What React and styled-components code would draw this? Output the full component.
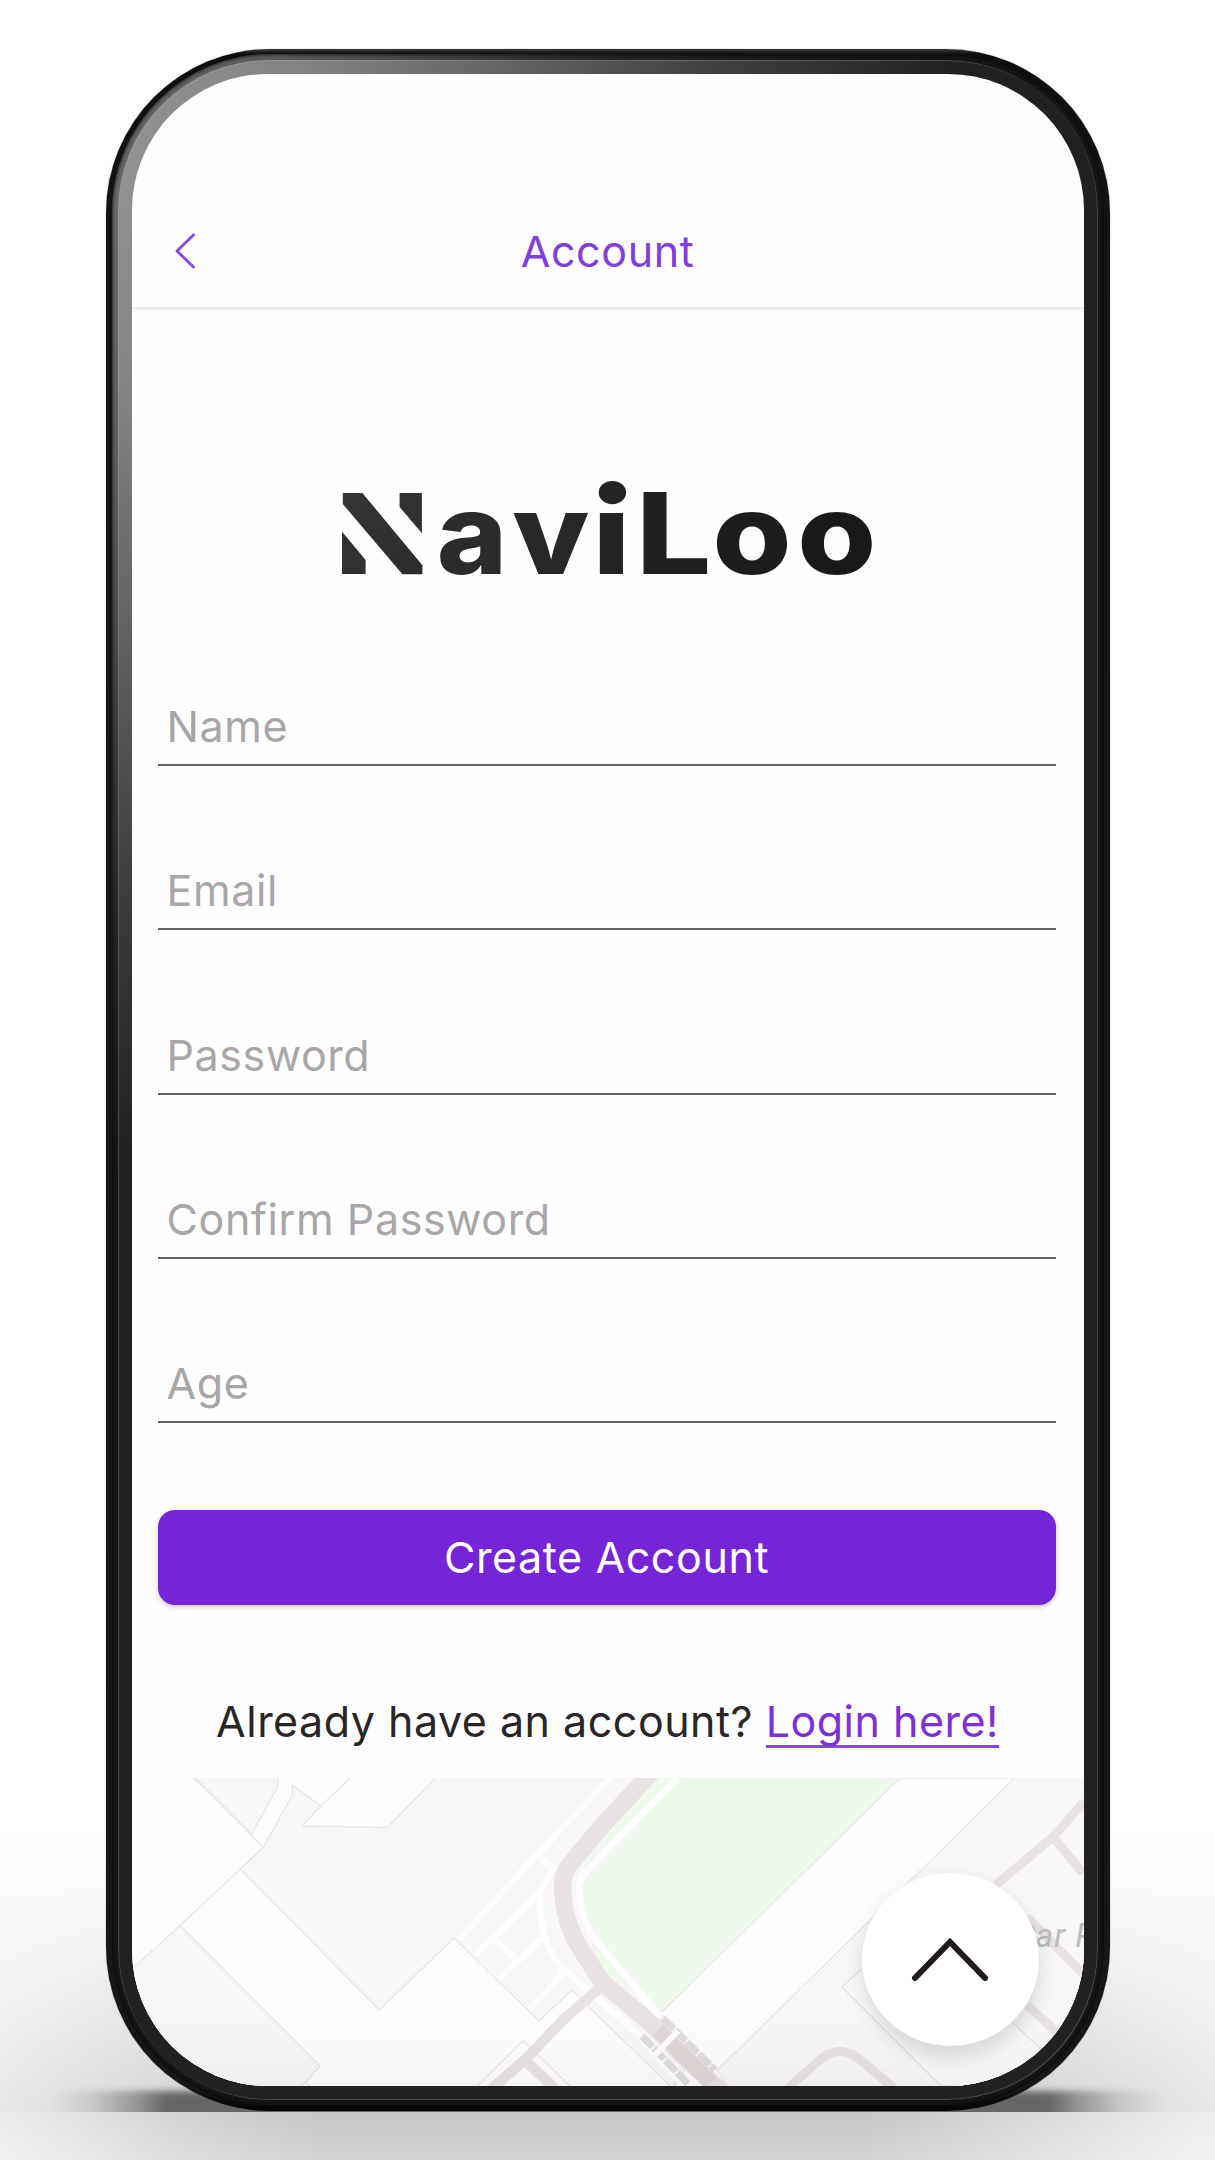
import React from "react";
import styled, { createGlobalStyle } from "styled-components";

const Global = createGlobalStyle`
  * { box-sizing: border-box; }
  body { margin: 0; background: #fff; font-family: Inter, "Liberation Sans", sans-serif; }
`;

const Stage = styled.main`
  position: relative;
  width: 1215px;
  height: 2160px;
  overflow: hidden;
  display: flex;
  justify-content: center;
  align-items: flex-start;
  padding: 49px 0 0 0;
  background:
    linear-gradient(to bottom, #fff 1830px, rgba(255, 255, 255, 0) 2110px),
    radial-gradient(ellipse 900px 620px at 607px 2112px, #c6c6c6 0, #cdcdcd 40%, #ebebeb 72%, #f0f0f0 100%);
`;

const ContactShadow = styled.div`
  position: absolute;
  left: 50px;
  top: 2091px;
  width: 1115px;
  height: 30px;
  background: linear-gradient(
    to right,
    rgba(102, 102, 102, 0), rgba(102, 102, 102, 0.15) 3.5%, rgba(102, 102, 102, 0.55) 7.5%, #666 10.5%,
    #666 89.5%, rgba(102, 102, 102, 0.55) 92.5%, rgba(102, 102, 102, 0.15) 96.5%, rgba(102, 102, 102, 0)
  );
  filter: blur(3px);
`;

const Floor = styled.div`
  position: absolute;
  left: 0;
  right: 0;
  top: 2112px;
  bottom: 0;
  background:
    linear-gradient(to bottom, rgba(255, 255, 255, 0), rgba(255, 255, 255, 0.25)),
    linear-gradient(to right, #ebebeb 0, #e2e2e2 80px, #d3d3d3 180px, #c6c6c6 330px, #c6c6c6 860px, #dcdcdc 1060px, #ececec 1200px);
`;

const Shell = styled.div`
  position: relative;
  width: 1004px;
  height: 2062px;
  border-radius: 164px;
  padding: 5px 6px 5px;
  background: linear-gradient(to bottom, #3a3d3a 0, #0d0d0d 5px, #151515 200px, #171717 2040px, #060606 2060px);
  box-shadow: 0 0 1px #555;
`;

const Rim = styled.div`
  width: 100%;
  height: 100%;
  border-radius: 158px;
  padding: 6px;
  background:
    radial-gradient(ellipse 700px 950px at 0 170px, #6a6a6a 0, #5a5a5a 30%, rgba(40, 40, 40, 0.7) 75%, rgba(22, 22, 22, 0) 100%),
    #161616;
  box-shadow: inset 0 0 3px 1px rgba(0, 0, 0, 0.6);
`;

const Bezel = styled.div`
  width: 100%;
  height: 100%;
  border-radius: 151px;
  padding: 14px;
  background:
    radial-gradient(ellipse 820px 980px at 20px 110px, #929292 0, #848484 22%, #606060 48%, #3a3a3a 76%, rgba(33, 33, 33, 0) 100%),
    #212121;
  box-shadow: inset 1px 1px 1px rgba(180, 180, 180, 0.3), inset -1px -1px 0 #464646;
`;

const Screen = styled.div`
  position: relative;
  width: 100%;
  height: 100%;
  border-radius: 136px;
  overflow: hidden;
  background: #fefefe;
  display: flex;
  flex-direction: column;
`;

const Header = styled.header`
  height: 235px;
  flex: none;
  display: grid;
  grid-template-columns: 106px 1fr 106px;
  align-items: center;
  padding-top: 120px;
  border-bottom: 2px solid #ededed;
  box-shadow: 0 1px 3px rgba(0, 0, 0, 0.07);
`;

const BackButton = styled.button`
  border: 0;
  padding: 0 0 0 43px;
  background: none;
  display: flex;
  height: 36px;
`;

const Title = styled.h1`
  margin: 0;
  text-align: center;
  font-size: 43px;
  line-height: 50px;
  font-weight: 400;
  letter-spacing: 0.6px;
  color: #7f3fdd;
`;

const LogoArea = styled.div`
  flex: none;
  height: 293px;
  display: flex;
  justify-content: center;
  padding-top: 141px;
`;

const LogoSvg = styled.svg`
  flex: none;
  overflow: visible;
`;

const Form = styled.form`
  flex: none;
  width: 898px;
  margin: 0 28px 0 26px;
  display: flex;
  flex-direction: column;
`;

const Fields = styled.div`
  height: 821px;
  display: flex;
  flex-direction: column;
`;

const Field = styled.label`
  flex: 1;
  display: flex;
  align-items: flex-end;
  padding: 0 0 13px 9px;
  border-bottom: 2px solid #656265;
  font-size: 43px;
  line-height: 50px;
  font-weight: 400;
  letter-spacing: 0.6px;
  color: #aaa6a8;
`;

const Submit = styled.button`
  margin-top: 87px;
  height: 95px;
  border: 0;
  border-radius: 17px;
  padding: 0 0 2px;
  background: #7524d8;
  color: #fff;
  font: 400 43px/50px Inter, "Liberation Sans", sans-serif;
  letter-spacing: 0.6px;
  box-shadow: 0 2px 5px rgba(0, 0, 0, 0.22);
`;

const LoginLine = styled.p`
  flex: none;
  margin: 91px 0 0;
  height: 82px;
  text-align: center;
  white-space: nowrap;
  font-size: 43px;
  line-height: 50px;
  font-weight: 400;
  letter-spacing: 0.5px;
  color: #2a2627;
`;

const LoginLink = styled.a`
  color: #7b30da;
  display: inline-block;
  height: 52px;
  border-bottom: 3px solid #8548de;
`;

const MapArea = styled.section`
  position: relative;
  flex: 1;
  min-height: 0;
  svg { display: block; }
  &::after {
    content: "";
    position: absolute;
    inset: auto 0 0 0;
    height: 75px;
    background: linear-gradient(to bottom, rgba(0, 0, 0, 0), rgba(0, 0, 0, 0.035));
  }
`;

const UpButton = styled.button`
  position: absolute;
  z-index: 2;
  right: 45px;
  bottom: 40px;
  width: 177px;
  height: 173px;
  border: 0;
  border-radius: 50%;
  padding: 0;
  background: #fff;
  display: grid;
  place-items: center;
  box-shadow: 0 10px 22px rgba(0, 0, 0, 0.14);
`;

const wordmark = [
  { char: "N", x: 335.6, stretch: 1.055, weight: 900, ink: "#313131" },
  { char: "a", x: 435.8, stretch: 1.07, weight: 800, ink: "#2b2b2b" },
  { char: "v", x: 511.2, stretch: 1.12, weight: 800, ink: "#282828" },
  { char: "i", x: 592.9, stretch: 1.05, weight: 900, ink: "#242424" },
  { char: "L", x: 635, stretch: 1.19, weight: 800, ink: "#202020" },
  { char: "o", x: 711.6, stretch: 1.14, weight: 800, ink: "#1d1d1d" },
  { char: "o", x: 796.2, stretch: 1.14, weight: 800, ink: "#191919" },
];

function Logo() {
  return (
    <LogoSvg width="560" height="150" viewBox="327 450 560 150" role="img" aria-label="NaviLoo">
      <defs>
        <linearGradient id="mark" gradientUnits="userSpaceOnUse" x1="341" y1="480" x2="421" y2="575">
          <stop offset="0" stopColor="#363636" />
          <stop offset="1" stopColor="#2b2b2b" />
        </linearGradient>
      </defs>
      <g fontFamily="Inter" fontSize="112">
        {wordmark.map(({ char, x, stretch, weight, ink }, i) => (
          <text key={i} transform={`translate(${x} 574.3) scale(${stretch} 1)`} fontWeight={weight} fill={ink}>
            {char}
          </text>
        ))}
      </g>
      <path d="M364.6 490H398.6V507L425 538V578H364.6V560L338 528V490Z" fill="#fefefe" />
      <path d="M341.8 493L361.4 493 421.4 565.3V574.3H401.4L341.8 504Z" fill="url(#mark)" />
      <rect x="590" y="478" width="42" height="33.7" fill="#fefefe" />
      <ellipse cx="611.4" cy="492.6" rx="13.7" ry="11.7" fill="#242424" />
    </LogoSvg>
  );
}

function StreetMap() {
  return (
    <svg width="952" height="308" viewBox="132 1778 952 308">
      <rect x="131" y="1778" width="953" height="308" fill="#fdfdfd" />
      <g transform="translate(120 1760) scale(.33333)" strokeLinejoin="round">
        <g fill="#f7f7f7" stroke="#e7e7e7" strokeWidth="4">
          <path d="M222 50H473V80L395 222Z" />
          <path d="M517 75L603 138 545 198 803 202 950 50H2300L1657 985 1355 690 1257 783 1002 534 778 750 360 327 430 262 517 105Z" />
          <path d="M30 632L180 497 600 918 540 985H30Z" />
        </g>
        <g fill="none" stroke="#e7e7e7" strokeWidth="4">
          <path d="M222 54L430 262 180 497M690 54L603 138M1070 980L1210 842 1352 980M553 962L570 980" />
        </g>
        <g fill="none" stroke="#fefefe" strokeWidth="19" strokeLinecap="round">
          <path d="M1474 50L1250 285 1025 530M1250 285L1300 325 1260 395 1072 580M1260 395Q1256 500 1290 570Q1315 620 1340 635L1540 810 1700 985M1125 540L1190 600M1275 525L1145 650M1335 635L1232 742" />
        </g>
      </g>
      <path d="M660 1770H907L660.8 2013 600 1968 572 1887 588 1860Z" fill="#eefaec" />
      <path d="M900 1778L660.8 2013 680 2038 717.6 2070 1015.7 1778Z" fill="#fdfdfd" stroke="#e7e7e7" strokeWidth="1.3" />
      <path d="M1015.7 1777L717.6 2070 730 2090H1090V1777Z" fill="#f7f7f7" stroke="#e7e7e7" strokeWidth="1.3" />
      <path d="M875 1957L842 1987 941 2086H1084V2090L1011 2021Z" fill="#fafafa" stroke="#e4e4e4" strokeWidth="1.3" />
      <path d="M678 1778L600 1857 582 1876Q577 1885 581 1905Q584 1924 595 1939L624 1974 661 2017" fill="none" stroke="#fefefe" strokeWidth="7" />
      <g fill="none" stroke="#e8e2e2" strokeLinejoin="round">
        <path d="M652 1772L600 1828 568 1867Q561 1880 563 1892Q564 1925 584 1954L602 1982 655 2027 674 2047 722 2092" strokeWidth="17.5" />
        <path d="M602 1986L563 2020 527 2058 488 2092M525 2060L556 2090" strokeWidth="10.5" />
        <path d="M1084 1802L1053 1837 996 1885M1053 1837L1083 1873M1027 1917L1084 1975M1027 2005L1062 2037M786 2090L822 2058Q840 2045 858 2058L896 2090" strokeWidth="9" />
      </g>
      <path d="M658 2030L711 2083" stroke="#e0d7d7" strokeWidth="15" />
      <path d="M663 2018L715 2070M642 2036L688 2084" stroke="#dedede" strokeWidth="7" strokeDasharray="15 2" />
      <path d="M678 2031L655 2055" stroke="#fdfdfd" strokeWidth="6" />
      <text x="1014" y="1947" fontFamily="Roboto" fontStyle="italic" fontSize="33" letterSpacing="1" fill="#bdbdbd">Car P</text>
    </svg>
  );
}

const fields = ["Name", "Email", "Password", "Confirm Password", "Age"];

export default function App() {
  return (
    <>
      <Global />
      <Stage>
        <ContactShadow />
        <Floor />
        <Shell>
          <Rim>
            <Bezel>
              <Screen>
                <Header>
                  <BackButton type="button" aria-label="Back">
                    <svg width="22" height="36" viewBox="0 0 22 36" fill="none" stroke="#8748e3" strokeWidth="2.8" strokeLinecap="round" strokeLinejoin="round">
                      <path d="M18.5 2L2 18 18.5 34" />
                    </svg>
                  </BackButton>
                  <Title>Account</Title>
                </Header>
                <LogoArea><Logo /></LogoArea>
                <Form>
                  <Fields>
                    {fields.map((name) => <Field key={name}>{name}</Field>)}
                  </Fields>
                  <Submit type="button">Create Account</Submit>
                </Form>
                <LoginLine>Already have an account? <LoginLink>Login here!</LoginLink></LoginLine>
                <MapArea>
                  <StreetMap />
                  <UpButton type="button" aria-label="Expand">
                    <svg width="80" height="46" viewBox="0 0 80 46" fill="none" stroke="#231a1d" strokeWidth="6" strokeLinecap="round">
                      <path d="M5 41L40 5 75 41" />
                    </svg>
                  </UpButton>
                </MapArea>
              </Screen>
            </Bezel>
          </Rim>
        </Shell>
      </Stage>
    </>
  );
}
